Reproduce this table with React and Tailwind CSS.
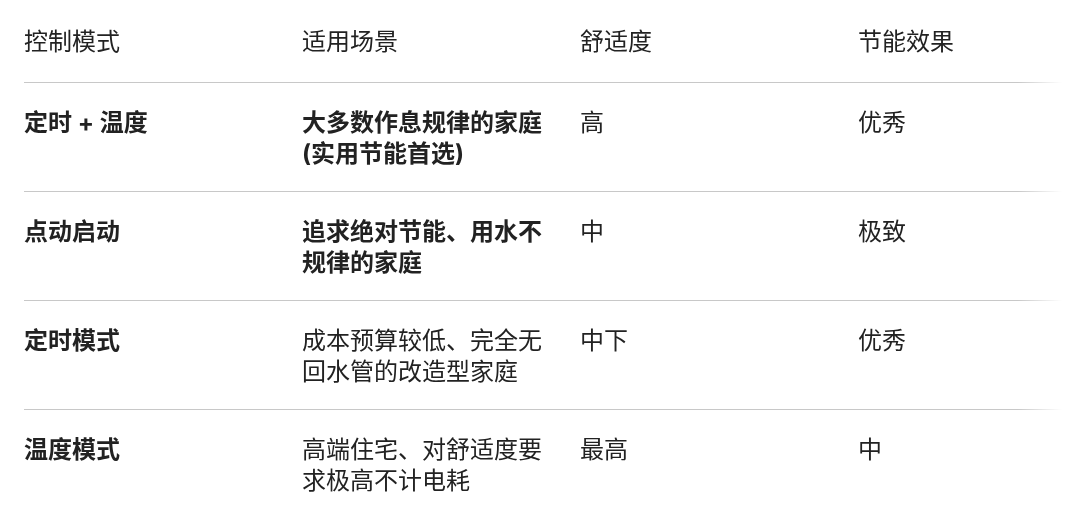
import React from "react";

const rows = [
  { mode: "定时 + 温度", scene: "大多数作息规律的家庭(实用节能首选)", sceneBold: true, comfort: "高", saving: "优秀" },
  { mode: "点动启动", scene: "追求绝对节能、用水不规律的家庭", sceneBold: true, comfort: "中", saving: "极致" },
  { mode: "定时模式", scene: "成本预算较低、完全无回水管的改造型家庭", sceneBold: false, comfort: "中下", saving: "优秀" },
  { mode: "温度模式", scene: "高端住宅、对舒适度要求极高不计电耗", sceneBold: false, comfort: "最高", saving: "中" },
];

export default function App() {
  return (
    <div className="min-h-screen bg-white font-['Inter','Noto_Sans_CJK_SC',sans-serif] text-[24px] leading-[31px] text-[#222]">
      <div className="ml-6 w-[1038px] overflow-hidden [mask-image:linear-gradient(to_right,black_calc(100%-44px),transparent)]">
        <div className="w-[1112px]">
          <div className="grid grid-cols-[278px_278px_278px_278px] border-b border-[#c8c8c8] pt-[26px] pb-[25px]">
            <div className="pr-6">控制模式</div>
            <div className="pr-6">适用场景</div>
            <div className="pr-6">舒适度</div>
            <div className="pr-6">节能效果</div>
          </div>
          {rows.map((r, i) => (
            <div
              key={r.mode}
              className={
                i < rows.length - 1
                  ? "grid grid-cols-[278px_278px_278px_278px] border-b border-[#c8c8c8] pt-6 pb-[22px]"
                  : "grid grid-cols-[278px_278px_278px_278px] pt-6 pb-[22px]"
              }
            >
              <div className="pr-6 font-bold">{r.mode}</div>
              <div className={r.sceneBold ? "pr-6 font-bold" : "pr-6"}>{r.scene}</div>
              <div className="pr-6">{r.comfort}</div>
              <div className="pr-6">{r.saving}</div>
            </div>
          ))}
        </div>
      </div>
    </div>
  );
}
